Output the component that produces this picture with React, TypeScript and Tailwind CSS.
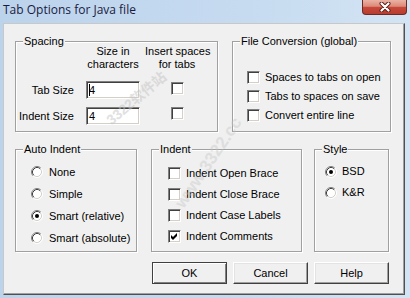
import React from 'react';

// Classic Win32 dialog: "Tab Options for Java file"

const Checkbox = ({ checked = false }: { checked?: boolean }) => (
  <div className="relative w-[13px] h-[13px] shrink-0 bg-white border border-t-[#808080] border-l-[#808080] border-b-white border-r-white shadow-[inset_1px_1px_0_#404040,inset_-1px_-1px_0_#d4d0c8]">
    {checked && (
      <svg className="absolute left-[1px] top-[1px]" width="9" height="9" viewBox="0 0 9 9">
        <polygon points="1,3 3,5 7,1 7,4 3,8 1,6" fill="#000" />
      </svg>
    )}
  </div>
);

const Radio = ({ checked = false }: { checked?: boolean }) => (
  <svg width="12" height="12" viewBox="0 0 12 12" className="shrink-0">
    <circle cx="6" cy="6" r="5" fill="#fff" />
    <path d="M2.11 9.89A5.5 5.5 0 0 1 9.89 2.11" stroke="#808080" fill="none" />
    <path d="M9.89 2.11A5.5 5.5 0 0 1 2.11 9.89" stroke="#fff" fill="none" />
    <path d="M2.82 9.18A4.5 4.5 0 0 1 9.18 2.82" stroke="#404040" fill="none" />
    <path d="M9.18 2.82A4.5 4.5 0 0 1 2.82 9.18" stroke="#d4d0c8" fill="none" />
    {checked && <circle cx="6" cy="6" r="2" fill="#000" />}
  </svg>
);

const Group = ({
  title,
  className,
  children,
}: {
  title: string;
  className: string;
  children: React.ReactNode;
}) => (
  <div className={`relative shrink-0 border border-[#a0a0a0] shadow-[inset_1px_1px_0_#fff,1px_1px_0_#fff] ${className}`}>
    <span className="absolute top-[-7px] left-[7px] bg-[#f0f0f0] px-[1px] leading-[13px] whitespace-nowrap">
      {title}
    </span>
    {children}
  </div>
);

const SizeInput = ({ caret = false }: { caret?: boolean }) => (
  <div className="w-[54px] h-[18px] bg-white border border-t-[#808080] border-l-[#808080] border-b-white border-r-white shadow-[inset_1px_1px_0_#404040,inset_-1px_-1px_0_#d4d0c8] flex items-center pl-[2px]">
    {caret && <span className="w-px h-[12px] bg-black mr-[-1px]" />}
    <span>4</span>
  </div>
);

const Button = ({ label, isDefault = false }: { label: string; isDefault?: boolean }) => (
  <div
    className={`w-[75px] h-[22px] flex items-center justify-center bg-[#f0f0f0] border ${
      isDefault
        ? 'border-[#404040] shadow-[inset_1px_1px_0_#fff,inset_-1px_-1px_0_#808080]'
        : 'border-t-white border-l-white border-b-[#404040] border-r-[#404040] shadow-[inset_-1px_-1px_0_#a0a0a0,inset_1px_1px_0_#e3e3e3]'
    }`}
  >
    {label}
  </div>
);

export default function App() {
  return (
    <div className="relative w-[410px] h-[298px] overflow-hidden flex flex-col bg-[linear-gradient(90deg,#bcd3ec,#c6dbf0_60%,#d3e4f4)] font-['Liberation_Sans',Arial,sans-serif] text-[11px] text-black">
      {/* Title bar */}
      <div className="h-[23px] shrink-0 flex items-start justify-between">
        <span className="pl-[3px] pt-[1px] text-[12px] leading-[17px] text-[#1a1a40] font-['Open_Sans',sans-serif]">
          Tab Options for Java file
        </span>
        <div className="mr-[3px] w-[45px] h-[15px] rounded-b-[4px] border border-t-0 border-[#6d2a22] bg-[linear-gradient(#ebb3a5,#dd8a78_45%,#c6493a_52%,#b93d2e)] flex items-center justify-center">
          <svg width="12" height="10" viewBox="0 0 12 10">
            <path d="M2.5 1.5L9.5 8.5M9.5 1.5L2.5 8.5" stroke="#5a1c14" strokeWidth="4" strokeLinecap="round" />
            <path d="M2.5 1.5L9.5 8.5M9.5 1.5L2.5 8.5" stroke="#fff" strokeWidth="2.2" strokeLinecap="round" />
          </svg>
        </div>
      </div>

      {/* Client area */}
      <div className="ml-[3px] w-[402px] h-[272px] shrink-0 bg-[#f0f0f0] border border-t-[#c8c8c8] border-l-[#c8c8c8] border-b-[#505050] border-r-[#505050] shadow-[inset_0_-1px_0_#a0a0a0,inset_-1px_0_0_#a0a0a0] pt-[17px] pl-[11px] flex flex-col">
        {/* Row 1 */}
        <div className="flex gap-[14px]">
          <Group title="Spacing" className="w-[203px] h-[91px]">
            <div className="flex pt-[3px] leading-[13px]">
              <div className="w-[65px]" />
              <div className="w-[64px] text-center whitespace-nowrap">
                Size in
                <br />
                characters
              </div>
              <div className="w-[64px] text-center whitespace-nowrap">
                Insert spaces
                <br />
                for tabs
              </div>
            </div>
            <div className="flex items-start mt-[10px]">
              <div className="w-[58px] h-[18px] flex items-center justify-end">Tab Size</div>
              <div className="ml-[12px]">
                <SizeInput caret />
              </div>
              <div className="ml-[31px] mt-[1px]">
                <Checkbox />
              </div>
            </div>
            <div className="flex items-start mt-[8px]">
              <div className="w-[58px] h-[18px] flex items-center justify-end whitespace-nowrap">Indent Size</div>
              <div className="ml-[12px]">
                <SizeInput />
              </div>
              <div className="ml-[31px]">
                <Checkbox />
              </div>
            </div>
          </Group>

          <Group title="File Conversion (global)" className="w-[159px] h-[91px]">
            <div className="pt-[26px] flex flex-col">
              {['Spaces to tabs on open', 'Tabs to spaces on save', 'Convert entire line'].map((t) => (
                <div key={t} className="h-[19px] flex items-center gap-[5px] pl-[14px] whitespace-nowrap">
                  <Checkbox />
                  <span>{t}</span>
                </div>
              ))}
            </div>
          </Group>
        </div>

        {/* Row 2 */}
        <div className="flex mt-[17px]">
          <Group title="Auto Indent" className="w-[122px] h-[103px]">
            <div className="pt-[11px] flex flex-col">
              {['None', 'Simple', 'Smart (relative)', 'Smart (absolute)'].map((t) => (
                <div key={t} className="h-[22px] flex items-center gap-[6px] pl-[15px] whitespace-nowrap">
                  <Radio checked={t === 'Smart (relative)'} />
                  <span>{t}</span>
                </div>
              ))}
            </div>
          </Group>

          <Group title="Indent" className="ml-[14px] w-[151px] h-[103px]">
            <div className="pt-[13px] flex flex-col">
              {['Indent Open Brace', 'Indent Close Brace', 'Indent Case Labels', 'Indent Comments'].map((t) => (
                <div key={t} className="h-[21px] flex items-center gap-[5px] pl-[16px] whitespace-nowrap">
                  <Checkbox checked={t === 'Indent Comments'} />
                  <span>{t}</span>
                </div>
              ))}
            </div>
          </Group>

          <Group title="Style" className="ml-[12px] w-[75px] h-[103px]">
            <div className="pt-[11px] flex flex-col">
              {['BSD', 'K&R'].map((t) => (
                <div key={t} className="h-[21px] flex items-center gap-[5px] pl-[10px]">
                  <Radio checked={t === 'BSD'} />
                  <span>{t}</span>
                </div>
              ))}
            </div>
          </Group>
        </div>

        {/* Buttons */}
        <div className="flex gap-[6px] mt-[10px] ml-[137px]">
          <Button label="OK" isDefault />
          <Button label="Cancel" />
          <Button label="Help" />
        </div>
      </div>

      {/* Site watermark */}
      <span className="pointer-events-none absolute left-[100px] top-[88px] rotate-[-40deg] text-[14px] font-bold text-[#c4c4c4] opacity-50 whitespace-nowrap font-['Liberation_Sans','Noto_Sans_CJK_SC',sans-serif]">
        3322软件站
      </span>
      <span className="pointer-events-none absolute left-[156px] top-[150px] rotate-[-56deg] text-[17px] font-bold text-[#c4c4c4] opacity-40 whitespace-nowrap">
        www.3322.cc
      </span>
    </div>
  );
}
